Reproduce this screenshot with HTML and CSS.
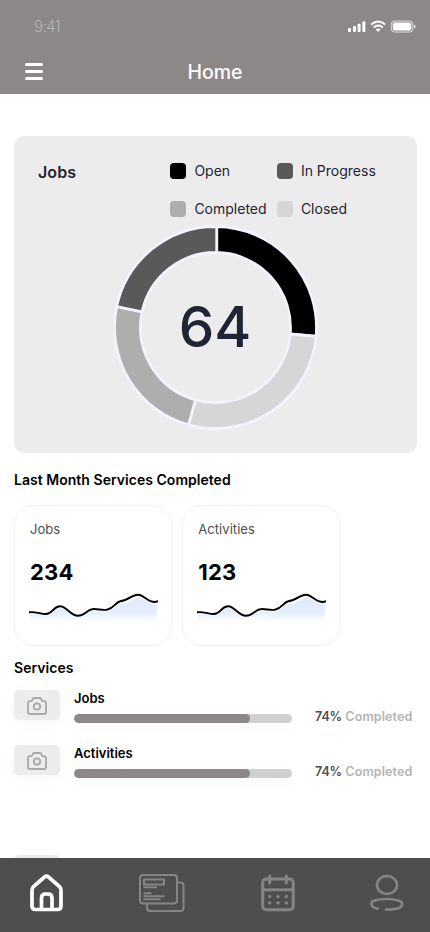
FILE: index.html
```html
<!DOCTYPE html>
<html lang="en">
<head>
<meta charset="utf-8">
<meta name="viewport" content="width=device-width, initial-scale=1">
<title>Home</title>
<link rel="stylesheet" href="styles.css">
</head>
<body>
<svg class="defs" width="0" height="0" aria-hidden="true">
  <defs>
    <linearGradient id="fade" x1="0" y1="0" x2="0" y2="1">
      <stop offset="0" stop-color="#e0eafc"/><stop offset=".6" stop-color="#e5eefd"/><stop offset="1" stop-color="#fff"/>
    </linearGradient>
    <symbol id="spark" viewBox="0 0 130 36">
      <path fill="url(#fade)" d="M1 20C8 19 13 23 19 22C25 20 26 14 32 15C38 16 42 24 49 24C56 24 58 18 65 18C72 18 76 20 82 17C87 14 88 11 94 11C100 10 104 5 110 5C117 6 121 13 128 11V29H1Z"/>
      <path fill="none" stroke="#000" stroke-width="1.9" d="M0 19.2C8 18.5 11 21 17 21C24 21 24 13.300 31 13.300C38 13.300 41 22.800 49 22.800C56 22.800 58 16 65 16C70 16 73 17.500 78 16.700C85 15.500 86 9 92 8C99 7.500 103 1.700 109 1.700C115 1.700 118 9 126 9L129 8.300"/>
    </symbol>
    <symbol id="camera" viewBox="0 0 20 18">
      <g fill="none" stroke="#a8a8a8" stroke-width="1.800" stroke-linejoin="round"><path d="M3 4.200H4.300C5.600 4.200 5.200 1 7.200 1H12.800C14.800 1 14.400 4.200 15.700 4.200H17Q19 4.200 19 6.200V15Q19 17 17 17H3Q1 17 1 15V6.200Q1 4.200 3 4.200Z"/><circle cx="10" cy="9.500" r="3.200"/></g>
    </symbol>
  </defs>
</svg>
<div class="screen">
  <header class="header">
    <div class="status">
      <span class="time">9:41</span>
      <svg width="68" height="14" viewBox="0 0 68 14" fill="#fff">
        <rect x="0" y="8" width="3" height="4" rx="1"/><rect x="5" y="6" width="3" height="6" rx="1"/><rect x="9.600" y="3.700" width="3" height="8.300" rx="1"/><rect x="14.400" y="1.300" width="3" height="10.700" rx="1"/>
        <g fill="none" stroke="#fff" stroke-width="2"><path d="M23.200 4.500Q30.200-1.500 37.200 4.500"/><path d="M25.600 7.400Q30.200 3.500 34.800 7.400"/></g><path d="M27.800 9.400Q30.200 7.400 32.600 9.400L30.200 12Z"/>
        <rect x="43.300" y="1" width="21.500" height="11" rx="3" fill="none" stroke="#fff" stroke-opacity=".7"/><rect x="44.800" y="2.500" width="18.500" height="8" rx="1.700"/><path d="M66 4.700Q67.700 5.300 67.700 6.600T66 8.500Z" opacity=".8"/>
      </svg>
    </div>
    <div class="titlebar">
      <button class="menu" aria-label="Menu"><span></span><span></span><span></span></button>
      <h1>Home</h1>
    </div>
  </header>
  <main>
    <section class="card">
      <div class="card-head">
        <h2>Jobs</h2>
        <ul class="legend">
          <li><i class="open"></i><span>Open</span></li>
          <li><i class="progress"></i><span>In Progress</span></li>
          <li><i class="completed"></i><span>Completed</span></li>
          <li><i class="closed"></i><span>Closed</span></li>
        </ul>
      </div>
      <div class="donut">
        <svg width="204" height="206" viewBox="-101.500 -103.500 204 206">
          <g stroke="#f2f4fd" stroke-width="2.800">
            <path fill="#000" d="M1.200-101A101 101 0 0 1 100.600 8.800L74.700 6.500A75 75 0 0 0 1.200-75Z"/>
            <path fill="#d6d6d6" d="M100.600 8.800A101 101 0 0 1-27 97.300L-20 72.300A75 75 0 0 0 74.700 6.500Z"/>
            <path fill="#aeaeae" d="M-27 97.300A101 101 0 0 1-98.800-21L-73.400-15.600A75 75 0 0 0-20 72.300Z"/>
            <path fill="#595959" d="M-98.800-21A101 101 0 0 1 1.200-101V-75A75 75 0 0 0-73.400-15.600Z"/>
          </g>
        </svg>
        <strong>64</strong>
      </div>
    </section>
    <h3 class="stats-title">Last Month Services Completed</h3>
    <div class="stats">
      <article><p>Jobs</p><b>234</b><svg class="spark"><use href="#spark"/></svg></article>
      <article><p>Activities</p><b>123</b><svg class="spark"><use href="#spark"/></svg></article>
    </div>
    <h3 class="services-title">Services</h3>
    <div class="services">
      <div class="service">
        <div class="thumb"><svg width="20" height="18"><use href="#camera"/></svg></div>
        <div class="info"><h4>Jobs</h4><div class="track"><div class="bar" style="width:176px"></div></div></div>
        <p class="percent"><b>74%</b> Completed</p>
      </div>
      <div class="service">
        <div class="thumb"><svg width="20" height="18"><use href="#camera"/></svg></div>
        <div class="info"><h4>Activities</h4><div class="track"><div class="bar" style="width:176px"></div></div></div>
        <p class="percent"><b>74%</b> Completed</p>
      </div>
      <div class="service next"><div class="thumb"></div></div>
    </div>
  </main>
  <nav class="tabs">
    <svg width="34" height="38" viewBox="0 0 34 38" fill="none" stroke="#fff" stroke-width="3.700" stroke-linejoin="round"><path d="M2 16Q2 14 3.500 12.600L14.500 3Q16.500 1.400 18.500 3L29.500 12.600Q31 14 31 16V32Q31 35.500 27.500 35.500H5.500Q2 35.500 2 32Z"/><path d="M11.500 35V24Q11.500 20 15.500 20H18Q22 20 22 24V35"/></svg>
    <svg width="46" height="38" viewBox="0 0 46 38" fill="none" stroke="#858585" stroke-width="2"><rect x="1" y="1" width="37" height="28.500" rx="3"/><path d="M38 8.500H41.500Q44.500 8.500 44.500 11.500V34Q44.500 37 41.500 37H11Q8 37 8 34V29.500"/><rect x="5" y="5.500" width="20" height="5"/><path d="M4.500 13.300H18M4.500 19.300H12.500M4.500 22.300H25.500M4.500 25.200H21.500"/></svg>
    <svg width="34" height="38" viewBox="0 0 34 38" fill="none" stroke="#858585" stroke-width="3"><rect x="1.700" y="5" width="30.500" height="30.800" rx="3.500"/><path d="M2 15.800H32"/><path stroke-linecap="round" d="M8.700 2V9M25.300 2V9"/><g fill="#858585" stroke="none"><circle cx="8.700" cy="22.500" r="1.700"/><circle cx="17" cy="22.500" r="1.700"/><circle cx="25.300" cy="22.500" r="1.700"/><circle cx="8.700" cy="28.900" r="1.700"/><circle cx="17" cy="28.900" r="1.700"/><circle cx="25.300" cy="28.900" r="1.700"/></g></svg>
    <svg width="34" height="38" viewBox="0 0 34 38" fill="none" stroke="#858585" stroke-width="2.600" stroke-linecap="round"><ellipse cx="17" cy="11" rx="10" ry="9"/><path d="M7.800 34.700C.2 33-.5 28 5 26.500C11 24.500 22 24.500 28.500 26.500C33.500 28 33.500 32.500 28.500 34.200C25 35.200 20 35.700 16 35.600"/></svg>
  </nav>
</div>
</body>
</html>
```

FILE: styles.css
```css
* { box-sizing: border-box; margin: 0; padding: 0; }
body { font-family: Inter, sans-serif; background: #fff; color: #000; }
.defs { position: absolute; }
svg { display: block; flex: none; }
.screen { width: 430px; height: 932px; display: flex; flex-direction: column; overflow: hidden; }
.header { height: 94px; background: #8c8888; flex: none; }
.status { height: 50px; padding: 19px 14px 0 34px; display: flex; justify-content: space-between; }
.status svg { margin-top: .5px; }
.time { font-size: 15.500px; line-height: 16px; font-weight: 200; color: #c4c2c2; letter-spacing: -.6px; }
.titlebar { height: 44px; display: grid; grid-template-columns: 1fr auto 1fr; align-items: center; padding: 0 25px; }
.menu { width: 18px; background: none; border: 0; display: flex; flex-direction: column; gap: 4px; padding-bottom: 2px; }
.menu span { height: 3px; border-radius: 2px; background: #fff; }
h1 { color: #fff; font-size: 19.500px; line-height: 24px; font-weight: 500; }
main { flex: 1; min-height: 0; overflow: hidden; padding: 42px 13px 0 14px; }
.card { height: 317px; border-radius: 10px; background: #ececec; color: #1f2534; padding: 25px 24px 0; }
.card-head { display: flex; height: 63px; }
h2 { width: 132px; font-size: 16px; line-height: 23px; font-weight: 600; letter-spacing: .1px; }
.legend { list-style: none; display: grid; grid-template-columns: 106.500px auto; grid-auto-rows: 20px; row-gap: 18px; font-size: 14px; line-height: 18px; }
.legend li { display: flex; align-items: center; gap: 8.400px; white-space: nowrap; }
.legend i { width: 16px; height: 16px; border-radius: 4px; }
.legend span { line-height: 17px; padding-bottom: 1px; }
.open { background: #000; }
.progress { background: #595959; }
.completed { background: #aeaeae; }
.closed { background: #d6d6d6; }
.donut { display: grid; place-items: center; height: 206px; }
.donut > * { grid-area: 1 / 1; }
.donut strong { font-size: 56.500px; line-height: 70px; font-weight: 450; padding-right: 1px; }
h3 { font-size: 14px; line-height: 18px; font-weight: 600; letter-spacing: .03px; }
.stats-title { margin-top: 18px; }
.stats { display: flex; gap: 10px; margin-top: 16px; }
.stats article { width: 158.300px; height: 141px; border: 1px solid #f1f0f7; border-radius: 20px; padding: 14px 13px 0 15px; }
.stats p { font-size: 13px; line-height: 18px; color: #4e4e4e; letter-spacing: .05px; }
.stats b { display: block; margin-top: 21px; font-size: 22px; line-height: 26px; font-weight: 700; letter-spacing: .2px; }
.spark { width: 130px; height: 36px; margin: 8px 0 0 -1px; }
.services-title { margin-top: 13px; }
.services { margin-top: 13px; }
.service { display: flex; height: 55px; }
.thumb { width: 46px; height: 30px; border-radius: 5px; background: #ececec; display: grid; place-items: center; padding-top: 1px; box-shadow: 0 4px 16px rgba(0,0,0,.035); }
.info { width: 218px; margin-left: 14px; }
h4 { font-size: 13px; line-height: 17px; font-weight: 600; }
.track { height: 9px; border-radius: 5px; background: #d0d0d0; margin-top: 7px; overflow: hidden; box-shadow: 0 5px 15px rgba(0,0,0,.035); }
.bar { height: 9px; border-radius: 5px; background: #8c8888; }
.percent { margin: 18px 0 0 23px; font-size: 12.500px; line-height: 17px; font-weight: 600; color: #b3b3b3; white-space: nowrap; letter-spacing: .12px; }
.percent b { font-weight: 600; color: #4e4e4e; letter-spacing: -.1px; }
.next { margin-top: 55px; }
.tabs { height: 74px; flex: none; background: #4e4e4e; display: flex; justify-content: space-between; padding: 16px 26px 0 30px; }
```
